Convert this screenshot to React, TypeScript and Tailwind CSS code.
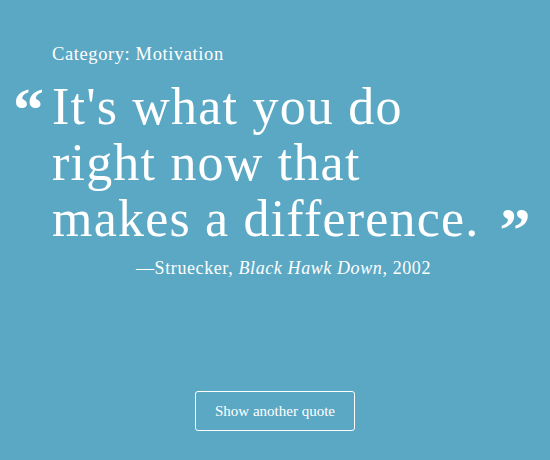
import React from "react";

export default function App() {
  return (
    <div
      className="w-[550px] h-[460px] bg-[#5ba8c4] text-white flex flex-col"
      style={{ fontFamily: '"Liberation Serif", serif' }}
    >
      <div className="pl-[52px] pt-[43px] text-[18.5px] leading-[22px] tracking-[0.6px]">
        Category: Motivation
      </div>
      <div className="flex mt-[14px]">
        <div className="w-[52px] pl-[13px] pt-[10px] text-[62px] leading-[40px] font-bold">
          &ldquo;
        </div>
        <div className="text-[52px] leading-[56px] tracking-[1.2px]">
          It's what you do
          <br />
          right now that
          <br />
          makes a difference.
          <span className="ml-[20px] text-[62px] leading-[40px] font-bold relative top-[14px]">&rdquo;</span>
        </div>
      </div>
      <div className="mt-[10px] pl-[136px] text-[18px] leading-[22px] tracking-[0.6px]">
        &mdash;Struecker, <i>Black Hawk Down</i>, 2002
      </div>
      <div className="flex-1" />
      <div className="flex justify-center pb-[29px]">
        <button className="w-[160px] h-[40px] border-[1.5px] border-white rounded-[3px] text-[15px]">
          Show another quote
        </button>
      </div>
    </div>
  );
}
